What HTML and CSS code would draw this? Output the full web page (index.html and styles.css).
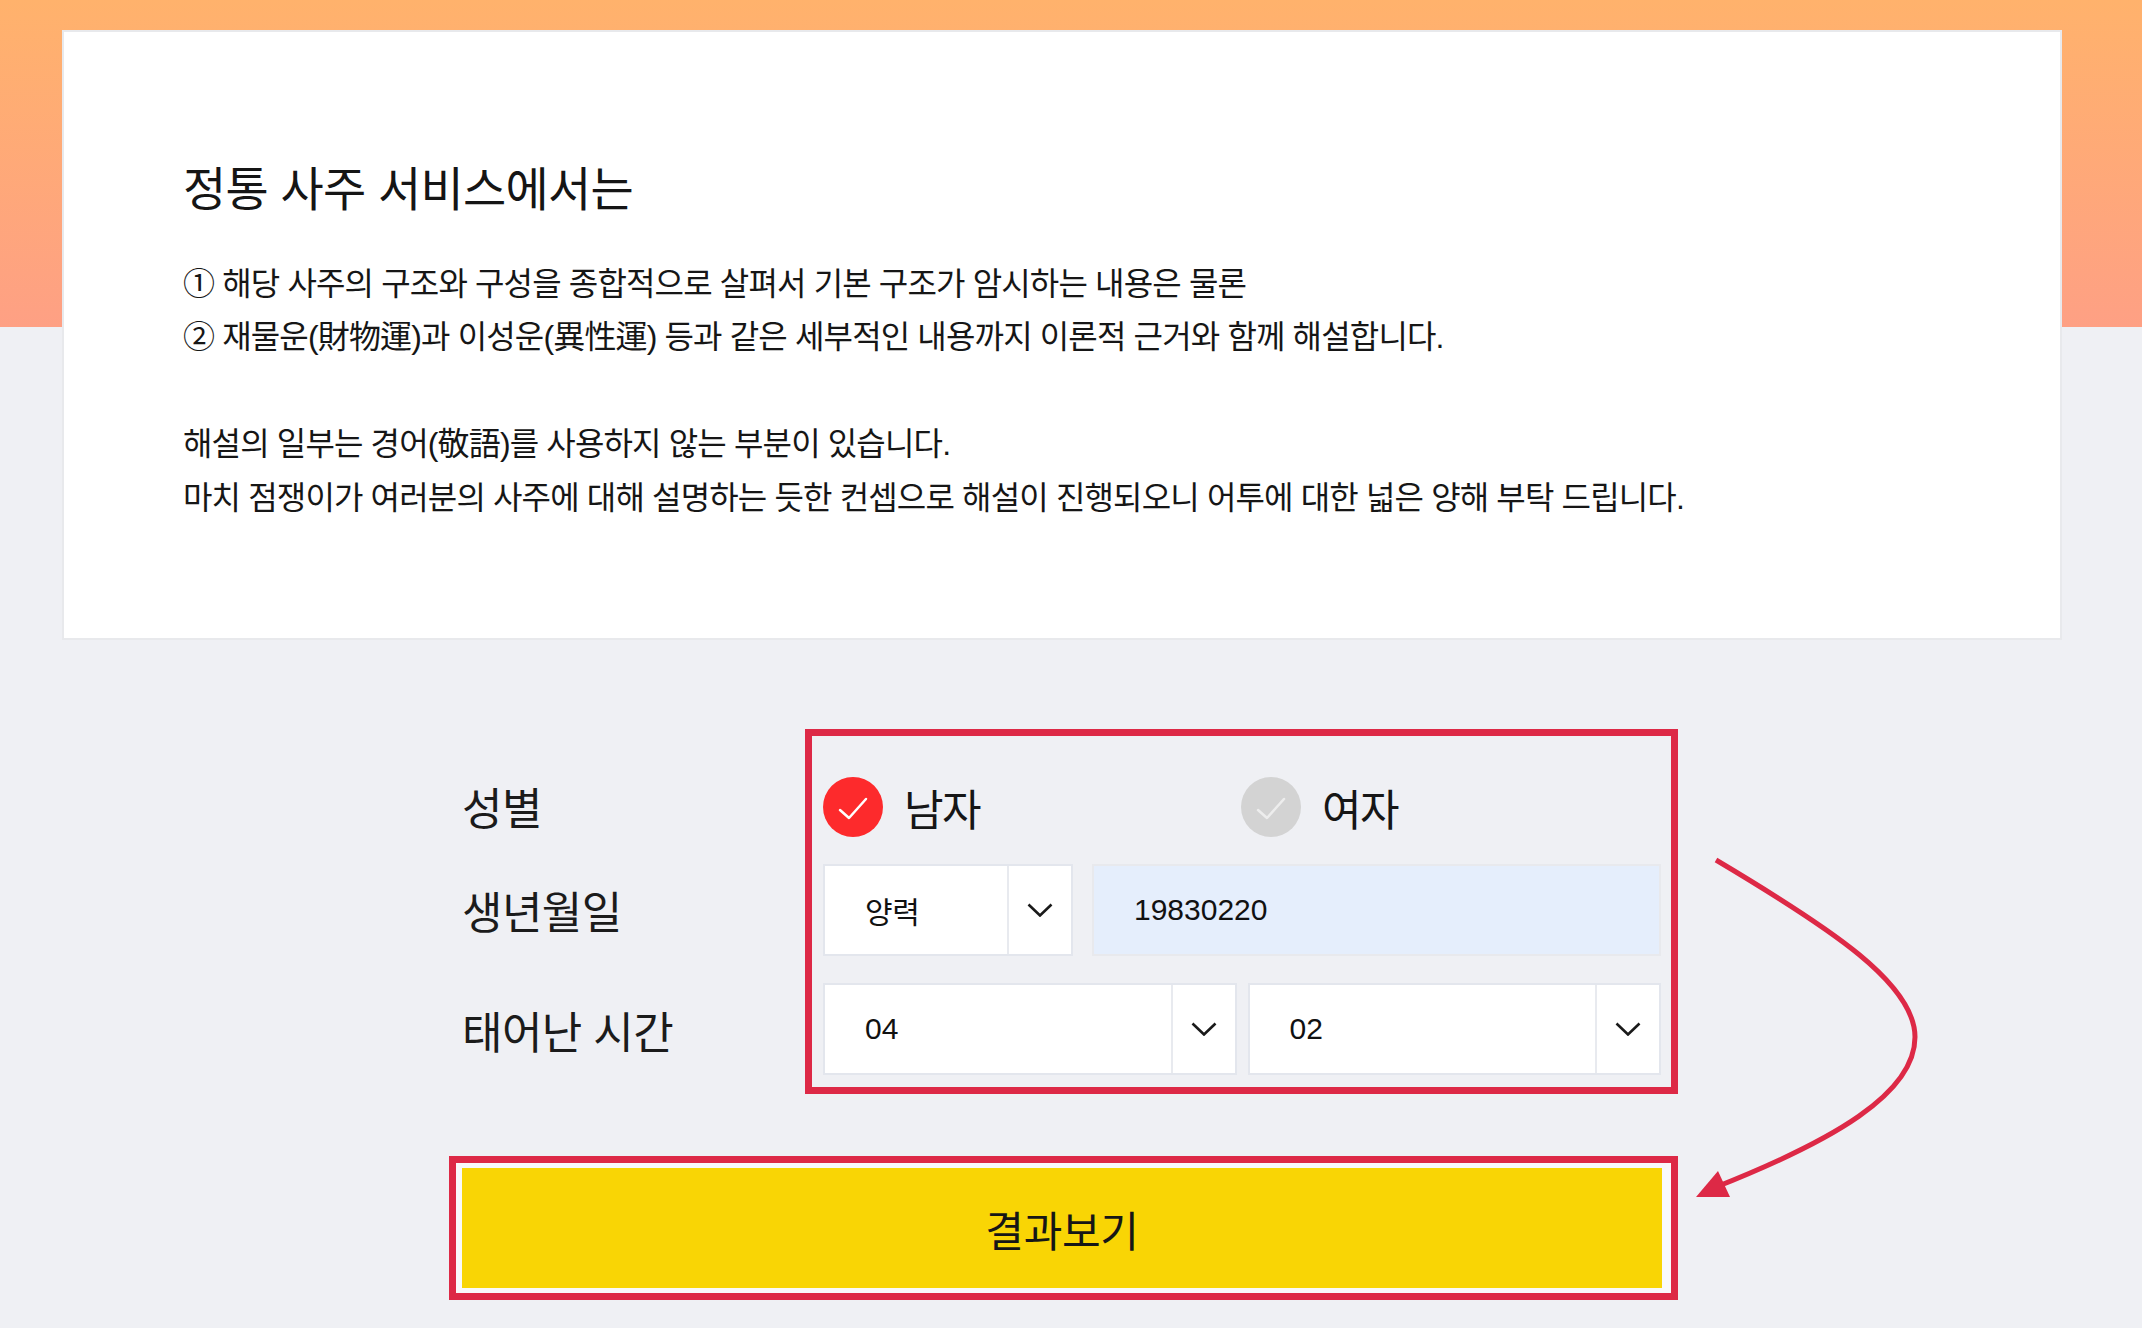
FILE: index.html
```html
<!DOCTYPE html>
<html lang="ko">
<head>
  <meta charset="UTF-8" />
  <meta name="viewport" content="width=device-width, initial-scale=1.0"/>
  <title>정통 사주 - 정보 입력</title>
  <link rel="stylesheet" href="styles.css">
</head>
<body>
  <div class="page">
    <div class="intro">
      <h2 class="intro-title">정통 사주 서비스에서는</h2>
      <p class="intro-text">① 해당 사주의 구조와 구성을 종합적으로 살펴서 기본 구조가 암시하는 내용은 물론<br>② 재물운(財物運)과 이성운(異性運) 등과 같은 세부적인 내용까지 이론적 근거와 함께 해설합니다.</p>
      <p class="intro-text">해설의 일부는 경어(敬語)를 사용하지 않는 부분이 있습니다.<br>마치 점쟁이가 여러분의 사주에 대해 설명하는 듯한 컨셉으로 해설이 진행되오니 어투에 대한 넓은 양해 부탁 드립니다.</p>
    </div>

    <form class="saju-form" onsubmit="return false">
      <div class="labels">
        <div class="label">성별</div>
        <div class="label">생년월일</div>
        <div class="label">태어난 시간</div>
      </div>

      <div class="fields">
        <div class="radio-row">
          <label class="radio checked">
            <span class="radio-dot">
              <svg viewBox="0 0 60 60" width="60" height="60"><polyline points="17,33 26,41 43,22" /></svg>
            </span>
            남자
          </label>
          <label class="radio">
            <span class="radio-dot">
              <svg viewBox="0 0 60 60" width="60" height="60"><polyline points="17,33 26,41 43,22" /></svg>
            </span>
            여자
          </label>
        </div>

        <div class="date-row">
          <div class="select select-cal">
            <span class="select-value">양력</span>
            <span class="select-arrow">
              <svg viewBox="0 0 26 14" width="26" height="14"><polyline points="1.5,1.5 13,12.5 24.5,1.5" /></svg>
            </span>
          </div>
          <div class="date-input">19830220</div>
        </div>

        <div class="time-row">
          <div class="select">
            <span class="select-value">04</span>
            <span class="select-arrow">
              <svg viewBox="0 0 26 14" width="26" height="14"><polyline points="1.5,1.5 13,12.5 24.5,1.5" /></svg>
            </span>
          </div>
          <div class="select">
            <span class="select-value">02</span>
            <span class="select-arrow">
              <svg viewBox="0 0 26 14" width="26" height="14"><polyline points="1.5,1.5 13,12.5 24.5,1.5" /></svg>
            </span>
          </div>
        </div>
      </div>

      <div class="submit-wrap">
        <button class="submit-btn" type="submit">결과보기</button>
      </div>

      <!-- guide arrow drawn over the page -->
      <svg class="guide-arrow" viewBox="0 0 240 380" width="240" height="380">
        <path d="M24,31 C140,100 223,155 223,208 C223,265 140,312 24,358" />
        <polygon points="4,368 26,342 38,368" />
      </svg>
    </form>
  </div>
</body>
</html>
```

FILE: styles.css
```css
* { margin: 0; padding: 0; box-sizing: border-box; }
body {
  font-family: "Liberation Sans", "Noto Sans CJK KR", sans-serif;
  color: #222;
  background: linear-gradient(180deg, #ffb26c 0%, #fea084 100%) top left / 100% 327px no-repeat, #eff0f4;
  min-height: 100vh;
  padding-right: 18px;
}
.page { width: 2000px; margin: 0 auto; padding-top: 30px; padding-bottom: 27px; }

.intro {
  background: #fff;
  border: 2px solid #e8e9ec;
  padding: 128px 119px 113px;
}
.intro-title {
  font-size: 47px;
  font-weight: 400;
  line-height: 60px;
  letter-spacing: -0.7px;
  color: #151515;
  margin-bottom: 38px;
}
.intro-text {
  font-size: 32px;
  line-height: 53.4px;
  letter-spacing: -0.85px;
  color: #161616;
}
.intro-text + .intro-text { margin-top: 53.4px; }

.saju-form {
  position: relative;
  width: 1200px;
  margin: 89px auto 0;
  display: grid;
  grid-template-columns: 343px 1fr;
}

.labels {
  padding-top: 47px;
  display: grid;
  grid-template-rows: 60px 92px 92px;
  row-gap: 28px;
}
.labels .label:last-child { margin-top: -1px; }
.label {
  display: flex;
  align-items: center;
  font-size: 44px;
  letter-spacing: -0.6px;
  color: #1b1b1b;
}

.fields {
  border: 7px solid #dd2946;
  padding: 40px 10px 12px 11px;
  margin-right: -16px;
}
.radio-row {
  display: grid;
  grid-template-columns: 418px 1fr;
  height: 60px;
}
.radio {
  display: flex;
  align-items: center;
  gap: 21px;
  font-size: 43px;
  letter-spacing: -1.5px;
  color: #161616;
}
.radio-dot {
  width: 60px;
  height: 60px;
  border-radius: 50%;
  background: #d3d3d3;
  display: flex;
}
.radio-dot polyline { fill: none; stroke: #ededed; stroke-width: 2.5; stroke-linecap: round; stroke-linejoin: round; }
.radio.checked .radio-dot { background: #fd2a2c; }
.radio.checked .radio-dot polyline { stroke: #fff; }

.date-row {
  margin-top: 28px;
  display: grid;
  grid-template-columns: 250px 1fr;
  gap: 19px;
  height: 92px;
}
.time-row {
  margin-top: 27px;
  display: grid;
  grid-template-columns: 1fr 1fr;
  gap: 11px;
  height: 92px;
}

.select {
  display: flex;
  background: #fff;
  border: 2px solid #e3e6ed;
}
.select-value {
  flex: 1;
  display: flex;
  align-items: center;
  padding-left: 40px;
  font-size: 30px;
  color: #111;
}
.select-cal .select-value { letter-spacing: -0.3px; }
.select-arrow {
  width: 64px;
  border-left: 2px solid #e8eaef;
  display: flex;
  align-items: center;
  justify-content: center;
}
.select-arrow polyline { fill: none; stroke: #1a1a1a; stroke-width: 2.6; }

.date-input {
  display: flex;
  align-items: center;
  padding-left: 40px;
  background: #e5eefc;
  border: 2px solid #e8e9ed;
  font-size: 30px;
  color: #111;
}

.submit-wrap {
  grid-column: 1 / -1;
  margin: 62px -16px 0 -13px;
  border: 7px solid #dd2946;
  background: #f9f9fb;
  padding: 5px 9px 5px 6px;
}
.submit-btn {
  display: block;
  width: 100%;
  height: 120px;
  border: none;
  background: #f9d505;
  font-family: inherit;
  font-size: 42px;
  letter-spacing: -0.3px;
  color: #161616;
  cursor: pointer;
}

.guide-arrow {
  position: absolute;
  left: 1230px;
  top: 100px;
  overflow: visible;
}
.guide-arrow path { fill: none; stroke: #dd2946; stroke-width: 5; }
.guide-arrow polygon { fill: #dd2946; }
```
